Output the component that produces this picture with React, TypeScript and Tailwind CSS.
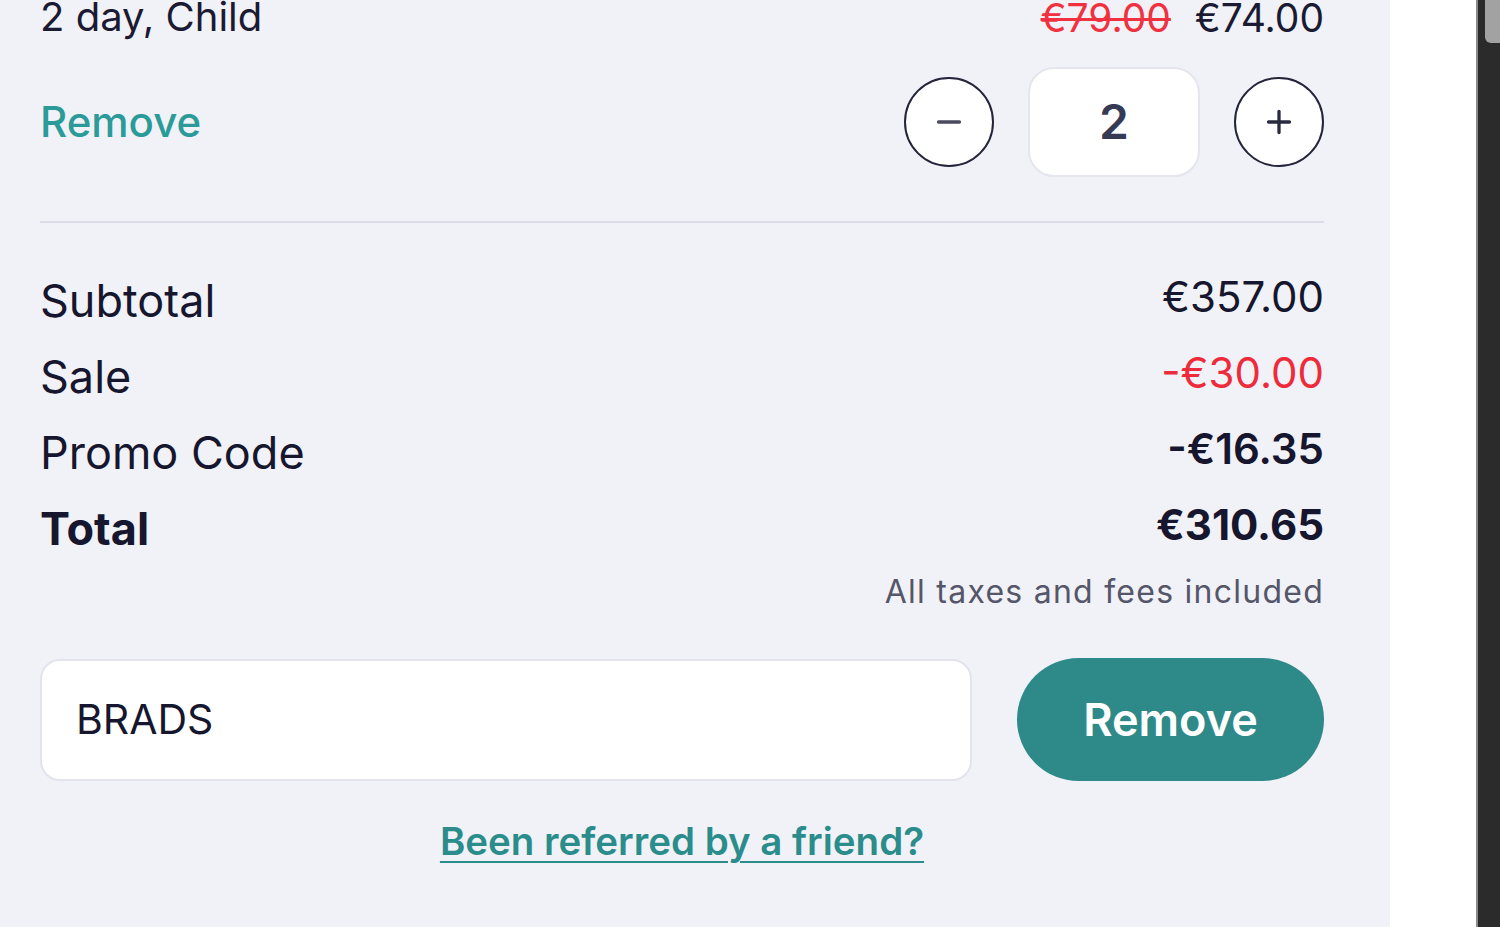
import { Minus, Plus } from 'lucide-react';

const font = { fontFamily: 'Inter, "Noto Sans", sans-serif' };

function SummaryRow({ label, value, labelClass = '', valueClass = '' }: { label: string; value: string; labelClass?: string; valueClass?: string }) {
  return (
    <div className="flex items-center justify-between h-[76px]">
      <span className={`text-[45px] leading-none text-[#16162e] ${labelClass}`}>{label}</span>
      <span className={`text-[42px] leading-none text-[#16162e] -mt-[6px] ${valueClass}`}>{value}</span>
    </div>
  );
}

export default function App() {
  return (
    <div className="flex h-[927px] w-[1500px] overflow-hidden" style={font}>
      {/* basket panel */}
      <div className="w-[1390px] bg-[#f1f2f7] pl-[40px] pr-[66px]">
        <div className="flex items-center justify-between -mt-[3px] h-[40px]">
          <span className="text-[40px] leading-none text-[#1a1a33]">2 day, Child</span>
          <div className="flex items-center gap-[24px] text-[39px] leading-none">
            <span className="text-[#f0313f] line-through decoration-[3px]">€79.00</span>
            <span className="text-[#1a1a33]">€74.00</span>
          </div>
        </div>

        <div className="flex items-center justify-between mt-[30px] h-[110px]">
          <button className="text-[42px] font-medium leading-none text-[#2a9b98]">Remove</button>
          <div className="flex items-center gap-[34px]">
            <button className="flex h-[90px] w-[90px] items-center justify-center rounded-full border-2 border-[#24243a] bg-white text-[#4a4a60]">
              <Minus size={36} strokeWidth={2.2} />
            </button>
            <div className="flex h-[110px] w-[172px] items-center justify-center rounded-[26px] border-2 border-[#e4e5ee] bg-white text-[48px] font-semibold text-[#373a55]">
              2
            </div>
            <button className="flex h-[90px] w-[90px] items-center justify-center rounded-full border-2 border-[#24243a] bg-white text-[#2b2b40]">
              <Plus size={36} strokeWidth={2.2} />
            </button>
          </div>
        </div>

        <div className="mt-[44px] h-[2px] bg-[#dcdde9]" />

        <div className="mt-[39px]">
          <SummaryRow label="Subtotal" value="€357.00" />
          <SummaryRow label="Sale" value="-€30.00" valueClass="text-[#ee2b3b]" />
          <SummaryRow label="Promo Code" value="-€16.35" valueClass="font-semibold" />
          <SummaryRow label="Total" value="€310.65" labelClass="font-bold" valueClass="font-bold" />
        </div>

        <p className="mt-[10px] text-right text-[32px] leading-none tracking-[1.25px] text-[#55566a]">All taxes and fees included</p>

        <div className="mt-[50px] flex items-center gap-[45px]">
          <div className="flex h-[122px] flex-1 items-center rounded-[20px] border-2 border-[#e2e3ec] bg-white px-[34px] text-[41px] text-[#16162e]">
            BRADS
          </div>
          <button className="h-[123px] w-[307px] rounded-full bg-[#2e8a89] text-[45px] font-semibold text-white">
            Remove
          </button>
        </div>

        <div className="mt-[32px] text-center">
          <a href="#" className="text-[38.5px] font-semibold text-[#2a8d8c] underline decoration-2 underline-offset-[6px]">
            Been referred by a friend?
          </a>
        </div>
      </div>

      {/* page gutter + scrollbar */}
      <div className="w-[86px] bg-white" />
      <div className="relative w-[24px] border-l-2 border-[#8a8a8a] bg-[#2b2b2b]">
        <div className="absolute right-0 top-0 h-[43px] w-[15px] rounded-bl-[6px] bg-[#a2a2a2]" />
      </div>
    </div>
  );
}
